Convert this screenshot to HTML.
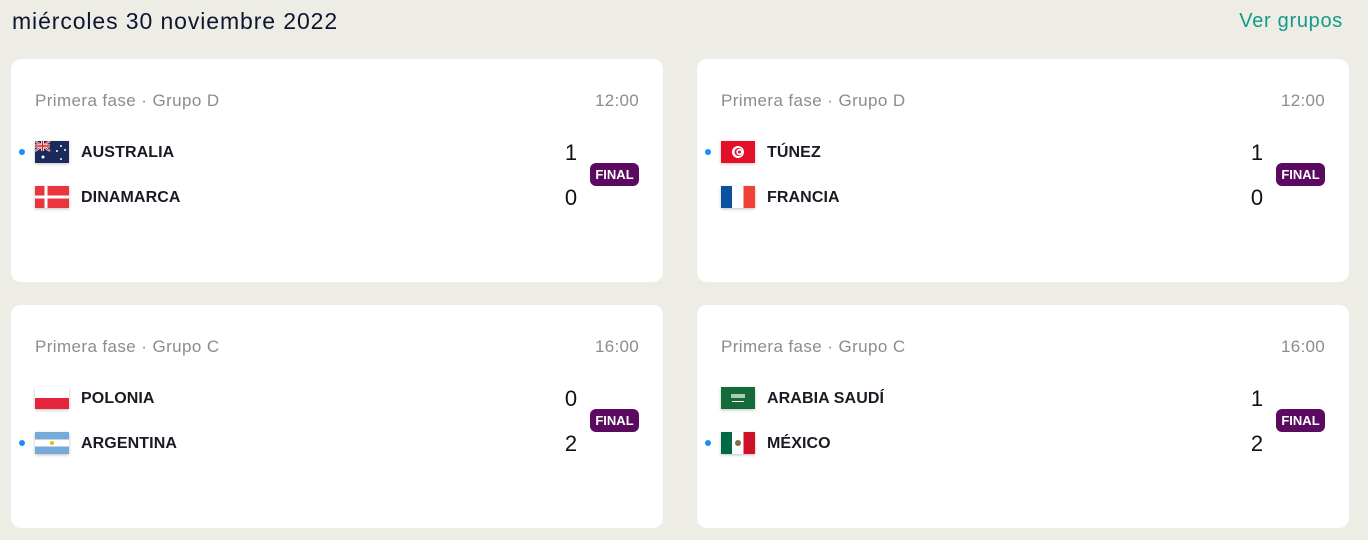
<!DOCTYPE html>
<html><head><meta charset="utf-8"><style>
*{margin:0;padding:0;box-sizing:border-box}
body{width:1368px;height:540px;background:#eeede5;font-family:"Liberation Sans",sans-serif;position:relative;overflow:hidden;color:#0f1733}
.h{position:absolute;left:12px;top:8px;font-size:23px;letter-spacing:0.9px;color:#0d1530}
.v{position:absolute;right:25px;top:10px;font-size:20px;color:#14998a;letter-spacing:0.7px}
.card{position:absolute;width:652px;height:223px;background:#fff;border-radius:10px}
.meta{position:absolute;left:24px;top:32px;font-size:17px;color:#8a8c92;letter-spacing:0.4px}
.time{position:absolute;right:24px;top:32px;font-size:17px;color:#8a8c92;letter-spacing:0.3px}
.flag{position:absolute;left:24px;width:34px;height:22px;box-shadow:0 1px 3px rgba(0,0,0,.25);overflow:hidden}
.name{position:absolute;left:70px;font-size:16px;font-weight:bold;letter-spacing:0.1px;color:#1a1a22}
.sc{position:absolute;left:553px;width:14px;text-align:center;font-size:22px;color:#111}
.dot{position:absolute;left:8px;width:6px;height:6px;border-radius:50%;background:#1a8cff}
.fin{position:absolute;left:579px;top:104px;width:49px;height:23px;border-radius:6px;background:#5a0b5f;color:#fff;font-size:13px;font-weight:bold;text-align:center;line-height:23px}
</style></head><body>
<div class="h">miércoles 30 noviembre 2022</div>
<div class="v">Ver grupos</div>

<div class="card" style="left:11px;top:59px">
<div class="meta">Primera fase · Grupo D</div><div class="time">12:00</div>
<div class="dot" style="top:90px"></div>
<div class="flag" style="top:82px;background:#1b2a5c"><svg width="34" height="22"><rect width="15" height="10" fill="#1b2a5c"/><path d="M0 0L15 10M15 0L0 10" stroke="#fff" stroke-width="2"/><path d="M0 0L15 10M15 0L0 10" stroke="#d22" stroke-width=".8"/><path d="M7.5 0V10M0 5H15" stroke="#fff" stroke-width="3"/><path d="M7.5 0V10M0 5H15" stroke="#d22" stroke-width="1.5"/><circle cx="8" cy="16" r="1.5" fill="#fff"/><circle cx="26" cy="5" r="1" fill="#fff"/><circle cx="22" cy="10" r="1" fill="#fff"/><circle cx="30" cy="9" r="1" fill="#fff"/><circle cx="26" cy="18" r="1" fill="#fff"/></svg></div>
<div class="name" style="top:85px">AUSTRALIA</div><div class="sc" style="top:81px">1</div>
<div class="flag" style="top:127px;background:#e8353e"><svg width="34" height="22"><path d="M11 0V22M0 11H34" stroke="#fff" stroke-width="3"/></svg></div>
<div class="name" style="top:130px">DINAMARCA</div><div class="sc" style="top:126px">0</div>
<div class="fin">FINAL</div>
</div>

<div class="card" style="left:697px;top:59px">
<div class="meta">Primera fase · Grupo D</div><div class="time">12:00</div>
<div class="dot" style="top:90px"></div>
<div class="flag" style="top:82px;background:#e3102a"><svg width="34" height="22"><circle cx="17" cy="11" r="6" fill="#fff"/><circle cx="17.5" cy="11" r="4" fill="#e3102a"/><circle cx="18.5" cy="11" r="3.2" fill="#fff"/><circle cx="18.5" cy="11" r="1.5" fill="#e3102a"/></svg></div>
<div class="name" style="top:85px">TÚNEZ</div><div class="sc" style="top:81px">1</div>
<div class="flag" style="top:127px;background:linear-gradient(90deg,#0d4fa0 33%,#fff 33% 66%,#ef4135 66%)"></div>
<div class="name" style="top:130px">FRANCIA</div><div class="sc" style="top:126px">0</div>
<div class="fin">FINAL</div>
</div>

<div class="card" style="left:11px;top:305px">
<div class="meta">Primera fase · Grupo C</div><div class="time">16:00</div>
<div class="flag" style="top:82px;background:linear-gradient(#fff 50%,#e3243b 50%)"></div>
<div class="name" style="top:85px">POLONIA</div><div class="sc" style="top:81px">0</div>
<div class="dot" style="top:135px"></div>
<div class="flag" style="top:127px;background:linear-gradient(#75aadb 33%,#fff 33% 66%,#75aadb 66%)"><svg width="34" height="22"><circle cx="17" cy="11" r="2" fill="#f6b40e"/></svg></div>
<div class="name" style="top:130px">ARGENTINA</div><div class="sc" style="top:126px">2</div>
<div class="fin">FINAL</div>
</div>

<div class="card" style="left:697px;top:305px">
<div class="meta">Primera fase · Grupo C</div><div class="time">16:00</div>
<div class="flag" style="top:82px;background:#146b3a"><svg width="34" height="22"><rect x="10" y="7" width="14" height="4" fill="#cfe3d5" opacity=".8"/><rect x="11" y="14" width="12" height="1" fill="#fff"/></svg></div>
<div class="name" style="top:85px">ARABIA SAUDÍ</div><div class="sc" style="top:81px">1</div>
<div class="dot" style="top:135px"></div>
<div class="flag" style="top:127px;background:linear-gradient(90deg,#006847 33%,#fff 33% 66%,#ce1126 66%)"><svg width="34" height="22"><circle cx="17" cy="11" r="3" fill="#8a6a3a"/></svg></div>
<div class="name" style="top:130px">MÉXICO</div><div class="sc" style="top:126px">2</div>
<div class="fin">FINAL</div>
</div>
</body></html>
